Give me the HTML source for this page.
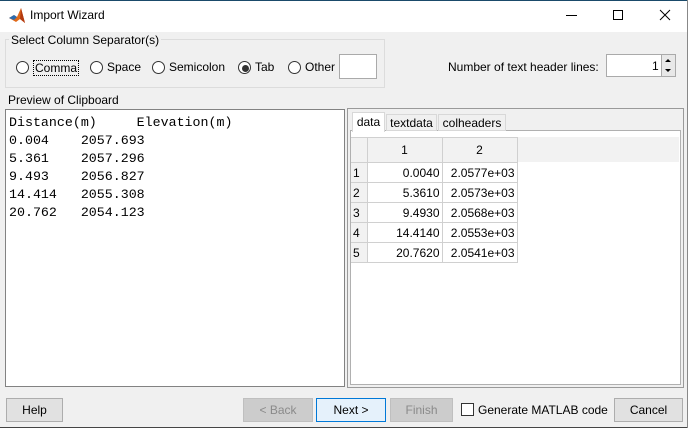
<!DOCTYPE html>
<html><head><style>
*{box-sizing:border-box;margin:0;padding:0}
body{width:688px;height:428px;background:#f0f0f0;font-family:"Liberation Sans",sans-serif;font-size:12px;color:#000;position:relative;overflow:hidden}
.a{position:absolute;white-space:nowrap}
.title{left:0;top:0;width:688px;height:32px;background:#fff}
.rad{position:absolute;width:13px;height:13px;border:1px solid #333;border-radius:50%;background:#fff}
.btn{position:absolute;height:24px;border:1px solid #adadad;background:#e1e1e1;text-align:center;line-height:22px}
.mono{font-family:"Liberation Mono",monospace;font-size:13.3px;line-height:18px;white-space:pre}
td{border-right:1px solid #d0d0d0;border-bottom:1px solid #d0d0d0;height:20px;padding:0 2px;font-size:12px}
</style></head><body>
<div class="a title"></div>
<svg class="a" style="left:8px;top:7px" width="18" height="18" viewBox="0 0 18 18"><path d="M1 11 L6 8 L9 10 L13 1 L17 16 L12 12 L8 15 Z" fill="#e06a1a"/><path d="M1 11 L6 8 L9 10 L6 13 Z" fill="#2a6cb0"/><path d="M13 1 L17 16 L12 12 Z" fill="#b33a10"/></svg>
<div class="a" style="left:30px;top:8px;font-size:12px">Import Wizard</div>
<div class="a" style="left:566px;top:15px;width:11px;height:1px;background:#000"></div>
<div class="a" style="left:613px;top:10px;width:10px;height:10px;border:1px solid #000"></div>
<svg class="a" style="left:659px;top:9px" width="12" height="12"><path d="M1 1L11 11M11 1L1 11" stroke="#000" stroke-width="1"/></svg>
<div class="a" style="left:0;top:0;width:688px;height:1px;background:#1a4a6a"></div>

<div class="a" style="left:5px;top:39px;width:380px;height:49px;border:1px solid #dcdcdc"></div>
<div class="a" style="left:9px;top:33px;background:#f0f0f0;padding:0 2px">Select Column Separator(s)</div>
<div class="rad" style="left:16px;top:61px"></div><div class="a" style="left:33px;top:60px;border:1px dotted #000;padding:0 1px">Comma</div>
<div class="rad" style="left:90px;top:61px"></div><div class="a" style="left:107px;top:60px">Space</div>
<div class="rad" style="left:152px;top:61px"></div><div class="a" style="left:169px;top:60px">Semicolon</div>
<div class="rad" style="left:238px;top:61px"></div><div class="a" style="left:242px;top:65px;width:7px;height:7px;border-radius:50%;background:#333"></div><div class="a" style="left:255px;top:60px">Tab</div>
<div class="rad" style="left:288px;top:61px"></div><div class="a" style="left:305px;top:60px">Other</div>
<div class="a" style="left:339px;top:54px;width:38px;height:25px;background:#fff;border:1px solid #aaa"></div>

<div class="a" style="left:448px;top:60px">Number of text header lines:</div>
<div class="a" style="left:606px;top:54px;width:70px;height:23px;background:#fff;border:1px solid #aaa"></div>
<div class="a" style="left:652px;top:59px">1</div>
<div class="a" style="left:661px;top:55px;width:14px;height:21px;background:#e8e8e8;border-left:1px solid #aaa"></div>
<svg class="a" style="left:663px;top:57px" width="10" height="18"><path d="M2 5L5 2L8 5Z M2 12L8 12L5 15Z" fill="#000"/></svg>

<div class="a" style="left:8px;top:93px">Preview of Clipboard</div>
<div class="a" style="left:5px;top:109px;width:340px;height:278px;background:#fff;border:1px solid #828282"></div>
<div class="a mono" style="left:9px;top:114px">Distance(m)     Elevation(m)
0.004    2057.693
5.361    2057.296
9.493    2056.827
14.414   2055.308
20.762   2054.123</div>

<div class="a" style="left:347px;top:108px;width:337px;height:280px;border:1px solid #9a9a9a"></div>
<div class="a" style="left:350px;top:130px;width:331px;height:255px;background:#fff;border:1px solid #b0b0b0"></div>
<div class="a" style="left:352px;top:112px;width:33px;height:20px;background:#fff;border:1px solid #d8d8d8;border-bottom:none;text-align:center;line-height:18px">data</div>
<div class="a" style="left:386px;top:114px;width:51px;height:17px;border:1px solid #d8d8d8;text-align:center;line-height:16px">textdata</div>
<div class="a" style="left:438px;top:114px;width:68px;height:17px;border:1px solid #d8d8d8;text-align:center;line-height:16px">colheaders</div>
<div class="a" style="left:351px;top:137px;width:328px;height:25px;background:#f2f2f2"></div>
<table class="a" style="left:351px;top:137px;border-collapse:collapse;border-top:1px solid #d0d0d0">
<tr style="background:#f2f2f2"><td style="width:16px;height:25px"></td><td style="width:75px;text-align:center">1</td><td style="width:75px;text-align:center">2</td></tr>
<tr><td style="background:#f2f2f2">1</td><td style="text-align:right">0.0040</td><td style="text-align:right">2.0577e+03</td></tr>
<tr><td style="background:#f2f2f2">2</td><td style="text-align:right">5.3610</td><td style="text-align:right">2.0573e+03</td></tr>
<tr><td style="background:#f2f2f2">3</td><td style="text-align:right">9.4930</td><td style="text-align:right">2.0568e+03</td></tr>
<tr><td style="background:#f2f2f2">4</td><td style="text-align:right">14.4140</td><td style="text-align:right">2.0553e+03</td></tr>
<tr><td style="background:#f2f2f2">5</td><td style="text-align:right">20.7620</td><td style="text-align:right">2.0541e+03</td></tr>
</table>

<div class="btn" style="left:6px;top:398px;width:57px">Help</div>
<div class="btn" style="left:243px;top:398px;width:70px;color:#8a8a8a;background:#ccc;border-color:#bfbfbf">&lt; Back</div>
<div class="btn" style="left:316px;top:398px;width:70px;border-color:#0078d7;background:#e5f1fb">Next &gt;</div>
<div class="btn" style="left:390px;top:398px;width:63px;color:#8a8a8a;background:#ccc;border-color:#bfbfbf">Finish</div>
<div class="a" style="left:461px;top:403px;width:13px;height:13px;border:1px solid #333;background:#fff"></div>
<div class="a" style="left:478px;top:403px">Generate MATLAB code</div>
<div class="btn" style="left:614px;top:398px;width:69px">Cancel</div>
<div class="a" style="left:0;top:427px;width:688px;height:1px;background:#444"></div>
<div class="a" style="left:687px;top:0;width:1px;height:428px;background:#888"></div>
</body></html>
